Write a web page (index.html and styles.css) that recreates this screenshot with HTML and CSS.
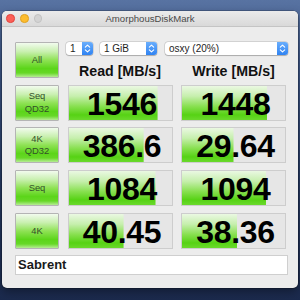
FILE: index.html
```html
<!DOCTYPE html>
<html>
<head>
<meta charset="utf-8">
<link rel="stylesheet" href="styles.css">
</head>
<body>
<div class="window">
  <div class="titlebar">
    <div class="lights">
      <span class="light red"></span>
      <span class="light yellow"></span>
      <span class="light gray"></span>
    </div>
    <div class="title">AmorphousDiskMark</div>
    <div></div>
  </div>
  <div class="content">
    <div class="row top">
      <div class="btn">All</div>
      <div class="topright">
        <div class="selects">
          <div class="select s1"><span class="sval">1</span><span class="stepper"><svg width="11" height="13" viewBox="0 0 11 13"><path d="M3.3 5.2 L5.5 3.2 L7.7 5.2 M3.3 7.8 L5.5 9.8 L7.7 7.8" fill="none" stroke="#fff" stroke-width="1.1" stroke-linecap="round" stroke-linejoin="round"/></svg></span></div>
          <div class="select s2"><span class="sval">1 GiB</span><span class="stepper"><svg width="11" height="13" viewBox="0 0 11 13"><path d="M3.3 5.2 L5.5 3.2 L7.7 5.2 M3.3 7.8 L5.5 9.8 L7.7 7.8" fill="none" stroke="#fff" stroke-width="1.1" stroke-linecap="round" stroke-linejoin="round"/></svg></span></div>
          <div class="select s3"><span class="sval">osxy (20%)</span><span class="stepper"><svg width="11" height="13" viewBox="0 0 11 13"><path d="M3.3 5.2 L5.5 3.2 L7.7 5.2 M3.3 7.8 L5.5 9.8 L7.7 7.8" fill="none" stroke="#fff" stroke-width="1.1" stroke-linecap="round" stroke-linejoin="round"/></svg></span></div>
        </div>
        <div class="headers">
          <div class="hdr">Read [MB/s]</div>
          <div class="hdr">Write [MB/s]</div>
        </div>
      </div>
    </div>
    <div class="row">
      <div class="btn">Seq<br>QD32</div>
      <div class="cell" style="--w:86%">1546</div>
      <div class="cell" style="--w:83%">1448</div>
    </div>
    <div class="row">
      <div class="btn">4K<br>QD32</div>
      <div class="cell" style="--w:72.5%">386.6</div>
      <div class="cell" style="--w:50%">29.64</div>
    </div>
    <div class="row">
      <div class="btn">Seq</div>
      <div class="cell" style="--w:84%">1084</div>
      <div class="cell" style="--w:82%">1094</div>
    </div>
    <div class="row">
      <div class="btn">4K</div>
      <div class="cell" style="--w:53%">40.45</div>
      <div class="cell" style="--w:53.5%">38.36</div>
    </div>
    <div class="comment">Sabrent</div>
  </div>
</div>
</body>
</html>
```

FILE: styles.css
```css
html, body {
  margin: 0;
  padding: 0;
}
body {
  width: 300px;
  height: 300px;
  overflow: hidden;
  background: linear-gradient(180deg, #5873a2 0%, #3d5686 20%, #263a63 60%, #1b2a4d 100%);
  font-family: "Liberation Sans", Arial, sans-serif;
}
.window {
  margin: 11px 0 0 2px;
  width: 296px;
  height: 277px;
  background: #ececec;
  border-radius: 5px;
  overflow: hidden;
  box-shadow: 0 0 0 0.5px rgba(0,0,0,0.35), 0 4px 10px rgba(0,0,0,0.35);
  display: flex;
  flex-direction: column;
}
.titlebar {
  height: 15px;
  flex: none;
  display: grid;
  grid-template-columns: 1fr auto 1fr;
  align-items: center;
  background: linear-gradient(180deg, #ebebeb, #d9d9d9);
  border-bottom: 1px solid #c4c4c4;
  box-sizing: border-box;
  height: 16px;
}
.lights {
  display: flex;
  gap: 5.3px;
  padding-left: 4.3px;
  align-items: center;
}
.light {
  width: 8.5px;
  height: 8.5px;
  border-radius: 50%;
  box-sizing: border-box;
}
.red { background: #fc5f57; border: 0.5px solid #e0443e; }
.yellow { background: #fdbc2e; border: 0.5px solid #dea123; }
.gray { background: #d3d3d3; border: 0.5px solid #c2c2c2; }
.title {
  font-family: "Liberation Sans", Arial, sans-serif;
  font-size: 9.6px;
  color: #4a4a4a;
}
.content {
  padding: 15px 10px 0 13px;
  display: flex;
  flex-direction: column;
  gap: 6.7px;
}
.row {
  display: grid;
  grid-template-columns: 44px 105px 105px;
  column-gap: 8.5px;
  height: 36px;
}
.top {
  grid-template-columns: 44px 1fr;
}
.btn {
  box-sizing: border-box;
  border: 1px solid #b4b4b4;
  border-radius: 1px;
  background: linear-gradient(180deg, #f2fbee 0%, #c9f0b0 25%, #8fe255 50%, #5cd51a 75%, #66d826 88%, #b6ec94 100%);
  display: flex;
  align-items: center;
  justify-content: center;
  text-align: center;
  font-family: "Liberation Sans", Arial, sans-serif;
  font-size: 9.4px;
  line-height: 12.5px;
  color: #33502a;
}
.topright {
  display: flex;
  flex-direction: column;
  justify-content: space-between;
}
.selects {
  display: flex;
  height: 13px;
  margin-left: -1.5px;
}
.select {
  display: flex;
  align-items: center;
  justify-content: space-between;
  background: #fff;
  border-radius: 3px;
  box-shadow: 0 0 0 0.5px rgba(0,0,0,0.18), 0 0.5px 1px rgba(0,0,0,0.2);
  font-family: "Liberation Sans", Arial, sans-serif;
  font-size: 10px;
  color: #1e1e1e;
}
.sval {
  padding-left: 4px;
}
.s1 { width: 27px; }
.s2 { width: 57px; margin-left: 7px; }
.s3 { flex: 1; margin-left: 8px; }
.stepper {
  width: 11px;
  height: 13px;
  border-radius: 0 3px 3px 0;
  background: linear-gradient(180deg, #6aaefc, #2f83f2);
  display: flex;
}
.headers {
  display: grid;
  grid-template-columns: 105px 105px;
  column-gap: 8.5px;
}
.hdr {
  text-align: center;
  font-family: "Liberation Sans", Arial, sans-serif;
  font-weight: bold;
  font-size: 14.2px;
  line-height: 14px;
  color: #111;
}
.cell {
  box-sizing: border-box;
  border: 1px solid #cdcdcd;
  background-color: #e6e6e6;
  background-image: linear-gradient(180deg, #eaf8e2 0%, #c6efad 30%, #88e050 60%, #56d214 85%, #6ad92c 100%);
  background-size: var(--w) 100%;
  background-repeat: no-repeat;
  display: flex;
  align-items: center;
  justify-content: center;
  padding: 2px 0 0 4px;
  font-family: "Liberation Sans", Arial, sans-serif;
  font-weight: bold;
  font-size: 32px;
  line-height: 32px;
  color: #000;
  letter-spacing: -0.3px;
}
.comment {
  margin-top: -0.5px;
  height: 20px;
  box-sizing: border-box;
  background: #fff;
  border: 1px solid #cfcfcf;
  display: flex;
  align-items: center;
  padding-left: 2px;
  font-family: "Liberation Sans", Arial, sans-serif;
  font-weight: bold;
  font-size: 13px;
  color: #1a1a1a;
}
```
